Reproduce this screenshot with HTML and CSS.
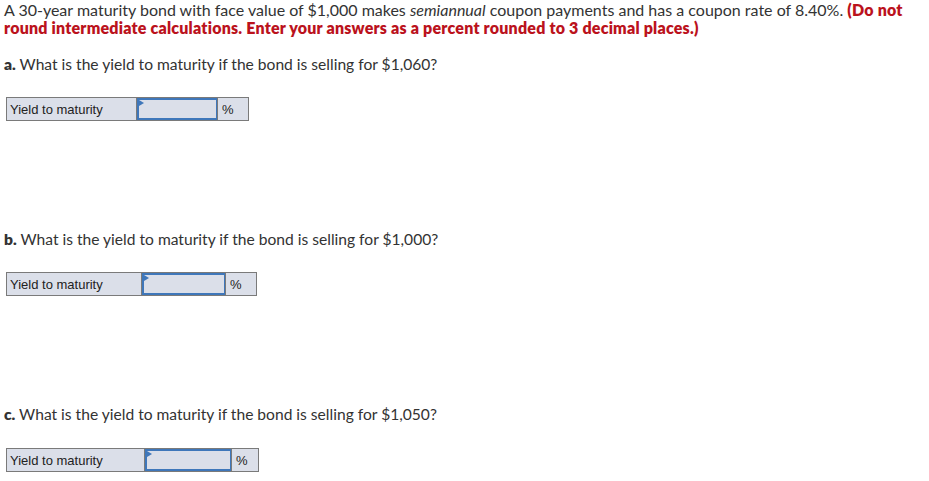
FILE: index.html
```html
<!DOCTYPE html>
<html>
<head>
<meta charset="utf-8">
<link rel="stylesheet" href="styles.css">
</head>
<body>
<div class="page">
  <p class="intro">A 30-year maturity bond with face value of $1,000 makes <em>semiannual</em> coupon payments and has a coupon rate of 8.40%. <strong class="warn">(Do not round intermediate calculations. Enter your answers as a percent rounded to 3 decimal places.)</strong></p>

  <section class="part">
    <p class="question"><b>a.</b> What is the yield to maturity if the bond is selling for $1,060?</p>
    <table class="answer answer-a">
      <tr>
        <td class="label">Yield to maturity</td>
        <td class="field"><div class="input"><span class="flag"></span></div></td>
        <td class="unit">%</td>
      </tr>
    </table>
  </section>

  <section class="part">
    <p class="question"><b>b.</b> What is the yield to maturity if the bond is selling for $1,000?</p>
    <table class="answer answer-b">
      <tr>
        <td class="label">Yield to maturity</td>
        <td class="field"><div class="input"><span class="flag"></span></div></td>
        <td class="unit">%</td>
      </tr>
    </table>
  </section>

  <section class="part">
    <p class="question"><b>c.</b> What is the yield to maturity if the bond is selling for $1,050?</p>
    <table class="answer answer-c">
      <tr>
        <td class="label">Yield to maturity</td>
        <td class="field"><div class="input"><span class="flag"></span></div></td>
        <td class="unit">%</td>
      </tr>
    </table>
  </section>
</div>
</body>
</html>
```

FILE: styles.css
```css
html, body {
  margin: 0;
  padding: 0;
  background: #fff;
}

.page {
  padding: 0 4px;
  font-family: Lato, "Liberation Sans", sans-serif;
  font-size: 15.6px;
  color: #333;
}

.intro {
  margin: 0;
  max-width: 905px;
  padding-top: 1px;
  font-size: 16px;
  line-height: 18px;
}

.intro em {
  font-style: italic;
}

.warn {
  color: #bb121c;
  font-weight: 800;
  letter-spacing: 0.2px;
}

.part {
  display: flex;
  flex-direction: column;
  align-items: flex-start;
}

.question {
  margin: 18px 0 0 0;
  line-height: 18px;
}

.part + .part .question {
  margin-top: 109px;
}

.question b {
  font-weight: 800;
}

.answer {
  margin: 24px 0 0 2px;
  border-collapse: collapse;
  table-layout: fixed;
  background: #dbdfe9;
  font-family: "Liberation Sans", Arial, sans-serif;
  font-size: 13px;
  line-height: 15px;
  color: #222;
}

.answer td {
  border: 1px solid #7a7a7a;
  height: 23px;
  padding: 0;
  box-sizing: border-box;
}

.label {
  padding-left: 3px !important;
}

.unit {
  padding-left: 4px !important;
}

.field {
  position: relative;
}

.input {
  position: relative;
  box-sizing: border-box;
  height: 22px;
  border: 2px solid #3f77ba;
  border-right-width: 1px;
}

.flag {
  position: absolute;
  left: 0;
  top: 0;
  width: 0;
  height: 0;
  border-top: 3px solid transparent;
  border-bottom: 3px solid transparent;
  border-left: 5px solid #3f77ba;
}

.answer-a { width: 242px; }
.answer-a .label { width: 130px; }
.answer-a .field { width: 81px; }
.answer-a .unit { width: 31px; }

.answer-b { width: 250px; }
.answer-b .label { width: 135px; }
.answer-b .field { width: 84px; }
.answer-b .unit { width: 31px; }

.answer-c { width: 252px; margin-top: 25px; }
.answer-c .label { width: 138px; }
.answer-c .field { width: 87px; }
.answer-c .unit { width: 27px; }
```
